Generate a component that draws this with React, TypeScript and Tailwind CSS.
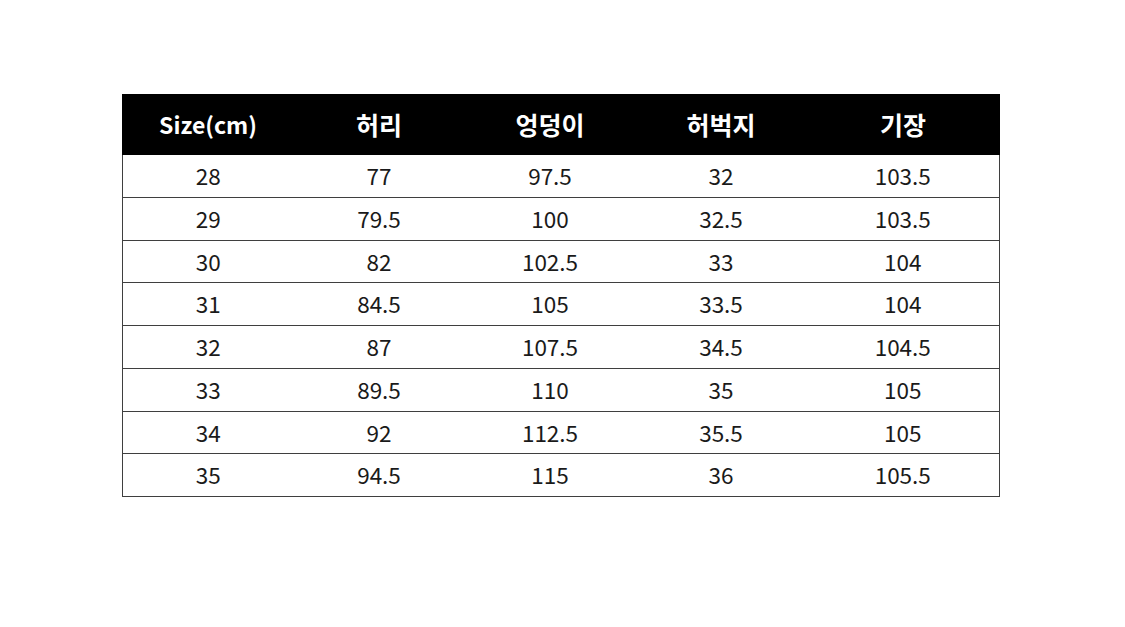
import React from "react";

const rows = [
  ["28", "77", "97.5", "32", "103.5"],
  ["29", "79.5", "100", "32.5", "103.5"],
  ["30", "82", "102.5", "33", "104"],
  ["31", "84.5", "105", "33.5", "104"],
  ["32", "87", "107.5", "34.5", "104.5"],
  ["33", "89.5", "110", "35", "105"],
  ["34", "92", "112.5", "35.5", "105"],
  ["35", "94.5", "115", "36", "105.5"],
];

const headers = ["Size(cm)", "허리", "엉덩이", "허벅지", "기장"];

export default function App() {
  return (
    <div
      className="w-[1125px] h-[627px] bg-white pt-[94px] pl-[122px]"
      style={{ fontFamily: '"Noto Sans CJK KR", "Noto Sans", sans-serif' }}
    >
      <table className="border-collapse w-[878px] table-fixed">
        <colgroup>
          <col className="w-[171px]" />
          <col className="w-[171px]" />
          <col className="w-[171px]" />
          <col className="w-[171px]" />
          <col />
        </colgroup>
        <thead>
          <tr className="bg-black h-[60px]">
            {headers.map((h, j) => (
              <th
                key={h}
                className={`text-white font-bold text-center align-middle p-0 border border-black ${
                  j === 0 ? "text-[23px]" : "text-[25px]"
                }`}
              >
                {h}
              </th>
            ))}
          </tr>
        </thead>
        <tbody>
          {rows.map((r, i) => (
            <tr key={i} className="h-[42.75px]">
              {r.map((c, j) => (
                <td
                  key={j}
                  className={`text-[#1a1a1a] text-[22.5px] text-center align-middle p-0 border-y border-[#3f3f3f] ${
                    j === 0 ? "border-l" : ""
                  } ${j === 4 ? "border-r" : ""}`}
                >
                  {c}
                </td>
              ))}
            </tr>
          ))}
        </tbody>
      </table>
    </div>
  );
}
